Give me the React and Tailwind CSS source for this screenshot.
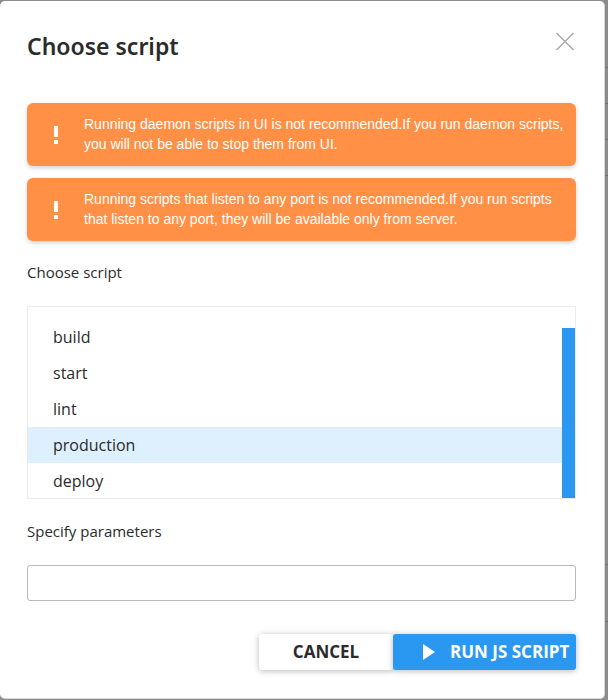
import { useState } from "react";

const warnings = [
  "Running daemon scripts in UI is not recommended.If you run daemon scripts, you will not be able to stop them from UI.",
  "Running scripts that listen to any port is not recommended.If you run scripts that listen to any port, they will be available only from server.",
];

const scripts = ["build", "start", "lint", "production", "deploy"];

function Warning({ children }) {
  return (
    <div
      role="alert"
      className="flex items-center rounded-md bg-[#ff9046] pt-[11px] pr-3 pb-3 pl-[26px] shadow-[0_2px_4px_rgba(0,0,0,0.18)]"
    >
      <svg className="mt-px mr-[25px] h-[18px] w-[6px] shrink-0" viewBox="0 0 6 18" fill="#fff" aria-hidden="true">
        <path d="M1 0h4v11H1zM1 14h4v4H1z" />
      </svg>
      <p className="font-['Liberation_Sans',Arial,sans-serif] text-sm leading-5 text-white">{children}</p>
    </div>
  );
}

/* Dimmed page behind the dialog: the row dividers that show past its edge. */
function Backdrop() {
  return (
    <div aria-hidden="true" className="w-[3px] shrink-0 divide-y divide-[#727272]">
      <div className="h-[67px]" />
      <div className="h-9" />
      <div className="h-9" />
      <div className="h-9" />
      <div className="h-[389px]" />
      <div className="h-[57px]" />
      <div className="h-9" />
    </div>
  );
}

export default function App() {
  const [selected, setSelected] = useState("production");
  const [params, setParams] = useState("");

  return (
    <div className="flex min-h-screen items-start bg-[#8b8b8b] pt-px pb-px font-['Open_Sans','Noto_Sans',sans-serif] text-[#2b2b2b]">
      <form
        role="dialog"
        aria-labelledby="dialog-title"
        onSubmit={(e) => e.preventDefault()}
        className="flex min-w-0 flex-1 flex-col rounded-[5px] border-r border-b border-[#d8d8d8] bg-white pt-[29px] pr-7 pb-7 pl-[27px]"
      >
        <header className="flex items-start justify-between">
          <h1 id="dialog-title" className="font-['Noto_Sans','Open_Sans',sans-serif] text-[23px] leading-8 font-semibold">
            Choose script
          </h1>
          <button type="button" aria-label="Close" className="mt-[2px]">
            <svg className="h-5 w-5" viewBox="0 0 20 20" fill="none" stroke="#a9a9a9" strokeWidth="1.5" aria-hidden="true">
              <path d="M0.5 1 17.5 18M17.5 1 0.5 18" />
            </svg>
          </button>
        </header>

        <div className="mt-[41px] flex flex-col gap-3">
          {warnings.map((text) => (
            <Warning key={text}>{text}</Warning>
          ))}
        </div>

        <fieldset className="mt-[19px]">
          <legend className="text-[15px] leading-6">Choose script</legend>
          <div className="mt-[22px] flex h-[193px] border border-[#ebebeb]">
            <div className="min-w-0 flex-1 overflow-hidden pt-3">
              {scripts.map((name) => (
                <label
                  key={name}
                  className="relative flex h-9 items-center pl-[25px] text-base has-checked:bg-[#deeffe]"
                >
                  <input
                    type="radio"
                    name="script"
                    value={name}
                    checked={selected === name}
                    onChange={() => setSelected(name)}
                    className="absolute inset-0 appearance-none"
                  />
                  {name}
                </label>
              ))}
            </div>
            <div className="flex w-[13px] flex-col pt-[21px]">
              <div className="flex-1 bg-[#2a98f0]" />
            </div>
          </div>
        </fieldset>

        <label htmlFor="params" className="mt-5 text-[15px] leading-6">
          Specify parameters
        </label>
        <input
          id="params"
          type="text"
          value={params}
          onChange={(e) => setParams(e.target.value)}
          className="mt-[22px] h-9 w-full rounded-[3px] border border-[#b9b9b9] px-3 text-base outline-none"
        />

        <footer className="mt-[33px] flex justify-end text-[17px] font-bold">
          <button
            type="button"
            className="h-9 w-[134px] rounded-[3px] bg-white shadow-[0_1px_6px_rgba(0,0,0,0.28)]"
          >
            CANCEL
          </button>
          <button
            type="submit"
            className="flex h-9 w-[183px] items-center rounded-[3px] bg-[#2a98f0] pl-[30px] whitespace-nowrap text-white shadow-[0_1px_6px_rgba(0,0,0,0.28)]"
          >
            <svg className="mr-[15px] h-4 w-3 shrink-0" viewBox="0 0 12 16" fill="#fff" aria-hidden="true">
              <path d="M0 0 12 8 0 16z" />
            </svg>
            RUN JS SCRIPT
          </button>
        </footer>
      </form>
      <Backdrop />
    </div>
  );
}
